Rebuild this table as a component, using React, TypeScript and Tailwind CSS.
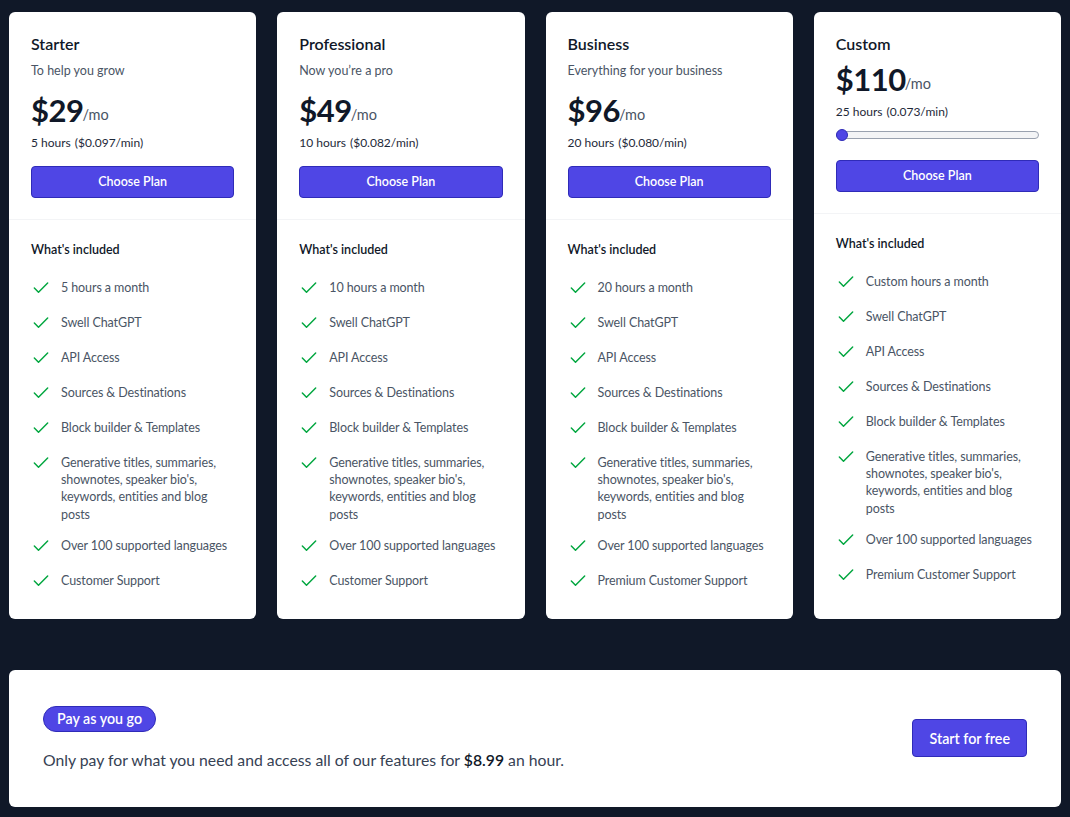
import { Check } from "lucide-react";

type Plan = {
  name: string;
  tagline?: string;
  price: string;
  hours: string;
  rate: string;
  slider?: boolean;
  features: string[];
};

const common = [
  "Swell ChatGPT",
  "API Access",
  "Sources & Destinations",
  "Block builder & Templates",
  "Generative titles, summaries, shownotes, speaker bio's, keywords, entities and blog posts",
  "Over 100 supported languages",
];

const plans: Plan[] = [
  {
    name: "Starter",
    tagline: "To help you grow",
    price: "$29",
    hours: "5 hours",
    rate: "($0.097/min)",
    features: ["5 hours a month", ...common, "Customer Support"],
  },
  {
    name: "Professional",
    tagline: "Now you\u2019re a pro",
    price: "$49",
    hours: "10 hours",
    rate: "($0.082/min)",
    features: ["10 hours a month", ...common, "Customer Support"],
  },
  {
    name: "Business",
    tagline: "Everything for your business",
    price: "$96",
    hours: "20 hours",
    rate: "($0.080/min)",
    features: ["20 hours a month", ...common, "Premium Customer Support"],
  },
  {
    name: "Custom",
    price: "$110",
    hours: "25 hours",
    rate: "(0.073/min)",
    slider: true,
    features: ["Custom hours a month", ...common, "Premium Customer Support"],
  },
];

const PlanCard = ({ plan }: { plan: Plan }) => {
  return (
    <div className="flex flex-col rounded-md bg-white">
      <div className="px-[22px] pt-[22px] pb-[21px]">
        <h3 className="text-[16px] leading-[20px] font-semibold text-gray-900">
          {plan.name}
        </h3>
        {plan.tagline && (
          <p className="mt-[8px] text-[12.5px] leading-[18px] text-gray-600">
            {plan.tagline}
          </p>
        )}
        <p className={plan.tagline ? "mt-[11px] flex items-end" : "mt-[6px] flex items-end"}>
          <span className="text-[31px] leading-[38px] font-bold tracking-[-0.5px] text-gray-900">
            {plan.price}
          </span>
          <span className="mb-[5px] ml-[-1px] text-[14.5px] leading-[18px] text-gray-600">/mo</span>
        </p>
        <p className="mt-[5px] text-[12px] leading-[18px] text-gray-800">
          {plan.hours}
          <span className="ml-[4px]">{plan.rate}</span>
        </p>
        {plan.slider && (
          <div className="relative mt-[8px] h-[12px]">
            <div className="absolute top-[2px] right-0 left-0 h-[8px] rounded-full border border-gray-400 bg-gray-100" />
            <div className="absolute top-0 left-0 h-[12px] w-[12px] rounded-full border border-[#2f2bb8] bg-[#4f46e5]" />
          </div>
        )}
        <button
          className={
            (plan.slider ? "mt-[19px] " : "mt-[14px] ") +
            "h-[32px] w-full rounded-[4px] border border-[#2f2bb8] bg-[#4f46e5] text-[12.5px] font-semibold text-white"
          }
        >
          Choose Plan
        </button>
      </div>
      <div className="border-t border-gray-100 px-[22px] pt-[21px] pb-[26px]">
        <h4 className="text-[12.5px] leading-[18px] font-semibold text-gray-900">
          What&apos;s included
        </h4>
        <ul className="mt-[17px] flex flex-col gap-[11px]">
          {plan.features.map((f) => (
            <li key={f} className="flex items-start gap-[10px]">
              <span className="flex h-[24px] w-[20px] shrink-0 items-center justify-center">
                <Check
                  className="h-[20px] w-[20px] text-green-600"
                  strokeWidth={1.75}
                  aria-hidden="true"
                />
              </span>
              <span className="pt-[3px] text-[12.5px] leading-[17.2px] tracking-[-0.1px] text-gray-600">
                {f}
              </span>
            </li>
          ))}
        </ul>
      </div>
    </div>
  );
};

const App = () => {
  return (
    <div
      className="min-h-[817px] bg-gray-900 px-[9px] pt-[12px] pb-[12px]"
      style={{ fontFamily: 'Lato, "Noto Sans", sans-serif' }}
    >
      <div className="grid grid-cols-4 gap-[21px]">
        {plans.map((p) => (
          <PlanCard key={p.name} plan={p} />
        ))}
      </div>
      <div className="mt-[51px] flex items-center justify-between rounded-md bg-white px-[34px] py-[36px]">
        <div>
          <span className="inline-block rounded-full border border-[#2f2bb8] bg-[#4f46e5] px-[13px] py-[3px] text-[14.25px] leading-[18px] font-semibold text-white">
            Pay as you go
          </span>
          <p className="mt-[17px] text-[15.75px] leading-[22px] text-gray-700">
            Only pay for what you need and access all of our features for{" "}
            <span className="font-semibold text-gray-900">$8.99</span> an hour.
          </p>
        </div>
        <button className="h-[38px] rounded-[4px] border border-[#2f2bb8] bg-[#4f46e5] px-[16px] text-[14.25px] font-semibold text-white">
          Start for free
        </button>
      </div>
    </div>
  );
};

export default App;
